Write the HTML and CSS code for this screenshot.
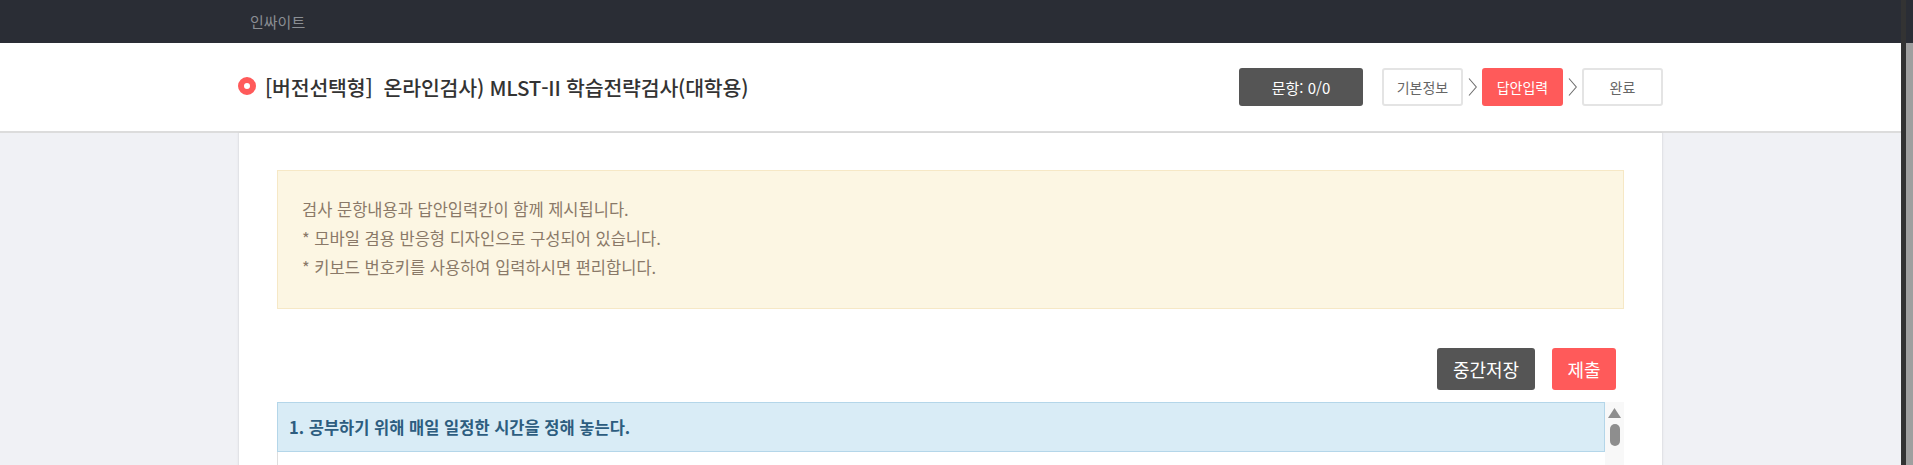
FILE: index.html
```html
<!DOCTYPE html>
<html lang="ko">
<head>
<meta charset="utf-8">
<title>인싸이트 - MLST-II 학습전략검사</title>
<link rel="stylesheet" href="styles.css">
</head>
<body>
<div class="window">
  <div class="page">
    <div class="topbar">
      <div class="container topbar-inner"><span class="brand">인싸이트</span></div>
    </div>
    <header class="header">
      <div class="container header-inner">
        <h1 class="title"><span class="dot"></span><span>[버전선택형]&nbsp; 온라인검사) MLST-II 학습전략검사(대학용)</span></h1>
        <div class="status">
          <div class="count">문항: 0/0</div>
          <ol class="steps">
            <li class="step">기본정보</li>
            <li class="chev"><svg viewBox="0 0 9 18"><polyline points="1,0.5 8.3,9 1,17.5" fill="none" stroke="#6f6f6f" stroke-width="1.1"/></svg></li>
            <li class="step active">답안입력</li>
            <li class="chev"><svg viewBox="0 0 9 18"><polyline points="1,0.5 8.3,9 1,17.5" fill="none" stroke="#6f6f6f" stroke-width="1.1"/></svg></li>
            <li class="step">완료</li>
          </ol>
        </div>
      </div>
    </header>
    <main class="container card">
      <div class="notice">
        <p>검사 문항내용과 답안입력칸이 함께 제시됩니다.</p>
        <p>* 모바일 겸용 반응형 디자인으로 구성되어 있습니다.</p>
        <p>* 키보드 번호키를 사용하여 입력하시면 편리합니다.</p>
      </div>
      <div class="actions">
        <button class="btn btn-save" type="button">중간저장</button>
        <button class="btn btn-submit" type="button">제출</button>
      </div>
      <div class="qwrap">
        <div class="qlist">
          <div class="qhead">1. 공부하기 위해 매일 일정한 시간을 정해 놓는다.</div>
        </div>
        <div class="vscroll">
          <svg class="vs-arrow" viewBox="0 0 13 10"><polygon points="6.5,0 13,10 0,10" fill="#8e8e8e"/></svg>
          <div class="vs-thumb"></div>
        </div>
      </div>
    </main>
  </div>
  <div class="winbar"></div>
</div>
</body>
</html>
```

FILE: styles.css
```css
html, body {
  margin: 0;
  padding: 0;
}
body {
  background: #f0f1f5;
  font-family: "Noto Sans CJK KR", "Noto Sans", sans-serif;
  overflow: hidden;
}
.window {
  display: flex;
  height: 465px;
  overflow: hidden;
}
.page {
  flex: 1;
  min-width: 0;
}
.winbar {
  flex: none;
  width: 7px;
  border-left: 5px solid #333333;
  background: linear-gradient(#2a2d35 43px, #9f9f9f 43px);
}
.container {
  width: 1425px;
  margin: 0 auto;
  box-sizing: border-box;
}

/* top bar */
.topbar {
  background: #2a2d35;
  height: 43px;
}
.topbar-inner {
  height: 100%;
  display: flex;
  align-items: center;
  padding-left: 12px;
}
.brand {
  color: #8b8e94;
  font-size: 15px;
}

/* header */
.header {
  background: #fff;
  border-bottom: 2px solid #dcdcdc;
}
.header-inner {
  height: 88px;
  display: flex;
  align-items: center;
  justify-content: space-between;
}
.title {
  margin: 0;
  display: flex;
  align-items: center;
  font-size: 20.5px;
  font-weight: 500;
  color: #333;
  letter-spacing: -0.2px;
}
.dot {
  width: 18px;
  height: 18px;
  box-sizing: border-box;
  border: 6px solid #ff5a5a;
  border-radius: 50%;
  background: #fff;
  margin-right: 9px;
  margin-top: -3px;
  flex: none;
}
.status {
  display: flex;
  align-items: center;
  gap: 19px;
}
.count {
  width: 124px;
  height: 38px;
  background: #555555;
  color: #fff;
  border-radius: 3px;
  font-size: 15px;
  display: flex;
  align-items: center;
  justify-content: center;
}
.steps {
  list-style: none;
  margin: 0;
  padding: 0;
  display: flex;
  align-items: center;
  gap: 5px;
}
.step {
  width: 81px;
  height: 38px;
  box-sizing: border-box;
  border: 2px solid #e4e4e4;
  border-radius: 3px;
  background: #fff;
  color: #666;
  font-size: 14px;
  display: flex;
  align-items: center;
  justify-content: center;
}
.step.active {
  background: #ff5a5a;
  border-color: #ff5a5a;
  color: #fff;
}
.chev svg {
  display: block;
  width: 9px;
  height: 18px;
}

/* card */
.card {
  background: #fff;
  border-left: 1px solid #e2e3e7;
  border-right: 1px solid #e2e3e7;
  box-shadow: 0 0 2px rgba(0, 0, 0, 0.06);
  padding: 37px 38px 40px;
  min-height: 400px;
}
.notice {
  background: #fcf6e3;
  border: 1px solid #f6e8c6;
  padding: 24px 24px 26px;
  color: #8a7968;
  font-size: 16.5px;
  line-height: 29px;
}
.notice p {
  margin: 0;
}
.actions {
  display: flex;
  justify-content: flex-end;
  gap: 17px;
  padding: 39px 8px 12px 0;
}
.btn {
  height: 42px;
  border: 0;
  border-radius: 3px;
  color: #fff;
  font-family: inherit;
  font-size: 18px;
  padding: 0;
  cursor: pointer;
}
.btn-save {
  width: 98px;
  background: #555555;
}
.btn-submit {
  width: 64px;
  background: #ff5a5a;
}
.qwrap {
  display: flex;
}
.qlist {
  flex: 1;
  border-left: 1px solid #dedede;
  min-height: 120px;
}
.qhead {
  height: 50px;
  box-sizing: border-box;
  margin-left: -1px;
  background: #d9ecf6;
  border: 1px solid #b4d6e9;
  padding-left: 11px;
  display: flex;
  align-items: center;
  font-size: 16.5px;
  font-weight: bold;
  color: #2d5d7f;
}
.vscroll {
  width: 19px;
  flex: none;
  background: #f8f8f8;
  display: flex;
  flex-direction: column;
  align-items: center;
  padding-top: 6px;
  gap: 6px;
}
.vs-arrow {
  display: block;
  width: 13px;
  height: 10px;
}
.vs-thumb {
  width: 10px;
  height: 22px;
  border-radius: 5px;
  background: #8e8e8e;
}
```
